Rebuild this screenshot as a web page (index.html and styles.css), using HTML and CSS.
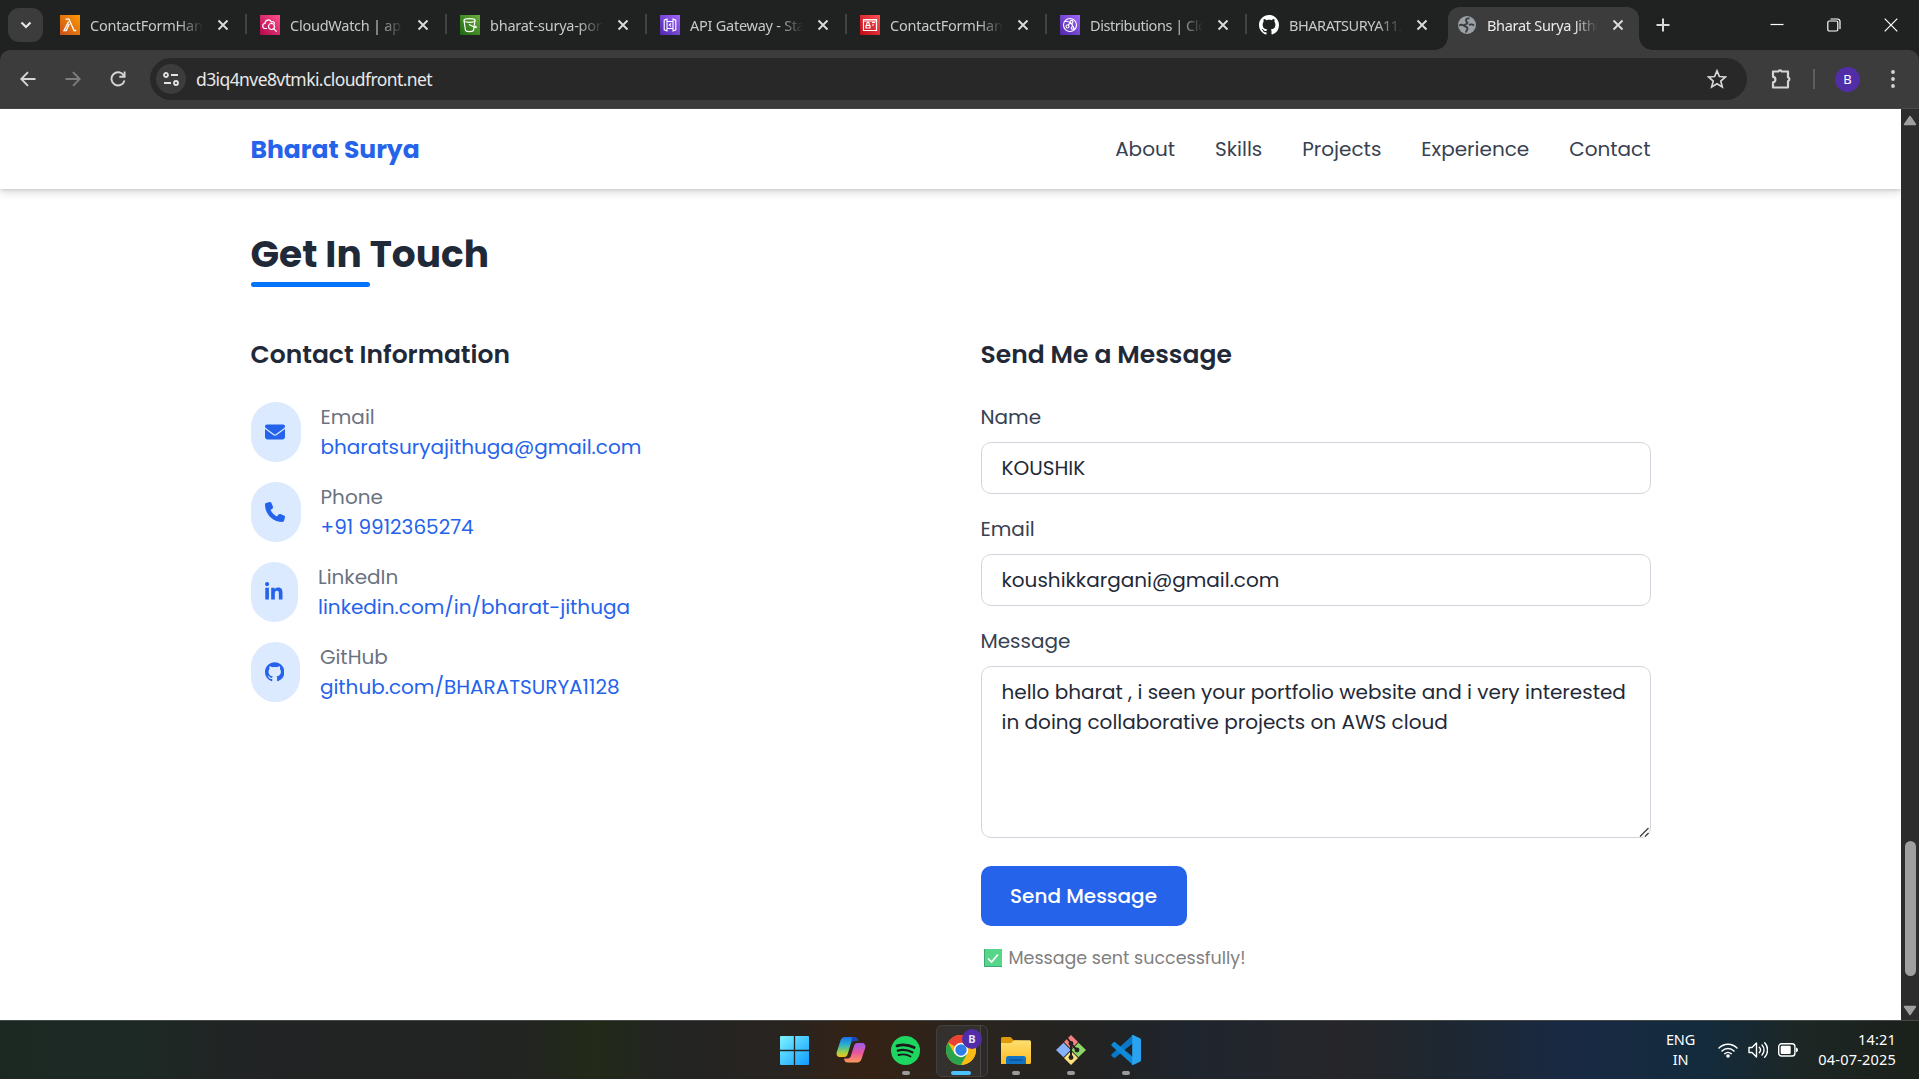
FILE: index.html
```html
<!DOCTYPE html>
<html lang="en">
<head>
<meta charset="utf-8">
<title>Bharat Surya Jithuga</title>
<link rel="stylesheet" href="styles.css">
</head>
<body>
<svg class="defs" aria-hidden="true">
  <defs>
    <symbol id="x" viewBox="0 0 12 12"><path d="M1.5 1.5l9 9M10.5 1.5l-9 9" stroke="currentColor" stroke-width="1.9" fill="none"/></symbol>
    <symbol id="octocat" viewBox="0 0 16 16"><path fill="currentColor" d="M8 0C3.58 0 0 3.58 0 8c0 3.54 2.29 6.53 5.47 7.59.4.07.55-.17.55-.38 0-.19-.01-.82-.01-1.49-2.01.37-2.53-.49-2.69-.94-.09-.23-.48-.94-.82-1.13-.28-.15-.68-.52-.01-.53.63-.01 1.08.58 1.23.82.72 1.21 1.87.87 2.33.66.07-.52.28-.87.51-1.07-1.78-.2-3.64-.89-3.64-3.95 0-.87.31-1.59.82-2.15-.08-.2-.36-1.02.08-2.12 0 0 .67-.21 2.2.82.64-.18 1.32-.27 2-.27s1.36.09 2 .27c1.53-1.04 2.2-.82 2.2-.82.44 1.1.16 1.92.08 2.12.51.56.82 1.27.82 2.15 0 3.07-1.87 3.75-3.65 3.95.29.25.54.73.54 1.48 0 1.07-.01 1.93-.01 2.2 0 .21.15.46.55.38A8.01 8.01 0 0 0 16 8c0-4.42-3.58-8-8-8z"/></symbol>
    <linearGradient id="orange" x1="0" y1="1" x2="1" y2="0"><stop offset="0" stop-color="#c8511b"/><stop offset="1" stop-color="#ff9900"/></linearGradient>
    <linearGradient id="pink" x1="0" y1="1" x2="1" y2="0"><stop offset="0" stop-color="#b0084d"/><stop offset="1" stop-color="#ff4f8b"/></linearGradient>
    <linearGradient id="green" x1="0" y1="1" x2="1" y2="0"><stop offset="0" stop-color="#1b660f"/><stop offset="1" stop-color="#6cae3e"/></linearGradient>
    <linearGradient id="purple" x1="0" y1="1" x2="1" y2="0"><stop offset="0" stop-color="#4d27a8"/><stop offset="1" stop-color="#a166ff"/></linearGradient>
    <linearGradient id="red" x1="0" y1="1" x2="1" y2="0"><stop offset="0" stop-color="#bd0816"/><stop offset="1" stop-color="#ff5252"/></linearGradient>
    <linearGradient id="win" x1="0" y1="0" x2="1" y2="1"><stop offset="0" stop-color="#7df3ff"/><stop offset="1" stop-color="#0f9bff"/></linearGradient>
    <linearGradient id="cpA" x1="0" y1="0" x2="0" y2="1"><stop offset="0" stop-color="#1b6ff0"/><stop offset=".4" stop-color="#2bb3c9"/><stop offset=".75" stop-color="#9ad04a"/><stop offset="1" stop-color="#f5c21b"/></linearGradient>
    <linearGradient id="cpB" x1="0" y1="0" x2="0" y2="1"><stop offset="0" stop-color="#9a5cf0"/><stop offset=".5" stop-color="#e8559d"/><stop offset="1" stop-color="#ff9a55"/></linearGradient>
    <linearGradient id="fold" x1="0" y1="0" x2="0" y2="1"><stop offset="0" stop-color="#ffdf70"/><stop offset="1" stop-color="#fcbb22"/></linearGradient>
  </defs>
</svg>

<header class="tabstrip">
  <button class="tab-search"><svg width="12" height="8" viewBox="0 0 12 8"><path d="M1.5 1.5L6 6l4.500-4.500" fill="none" stroke="#e6e6e6" stroke-width="2.200"/></svg></button>
  <div class="tab">
    <svg class="fav" viewBox="0 0 20 20"><path fill="url(#orange)" d="M0 0h20v20H0z"/><path d="M5.500 4.200H9l5 11.300h2.200M9.300 8.800L6.300 15.600H4L8.600 6.500" fill="none" stroke="#fff" stroke-width="1.300"/></svg>
    <span class="title">ContactFormHandler</span><svg class="close"><use href="#x"/></svg>
  </div>
  <div class="tab">
    <svg class="fav" viewBox="0 0 20 20"><path fill="url(#pink)" d="M0 0h20v20H0z"/><g fill="none" stroke="#fff" stroke-width="1.200"><path d="M7 13.500H5.500a2.500 2.500 0 0 1-.5-5C5 5 9.500 3.500 11.500 7c1.800-.8 3 .3 3 1.800"/><circle cx="11.500" cy="11.500" r="3"/><path d="M13.700 13.700l3 3"/></g></svg>
    <span class="title">CloudWatch | ap-south-1</span><svg class="close"><use href="#x"/></svg>
  </div>
  <div class="tab">
    <svg class="fav" viewBox="0 0 20 20"><path fill="url(#green)" d="M0 0h20v20H0z"/><g fill="none" stroke="#fff" stroke-width="1.200"><ellipse cx="9.500" cy="5.500" rx="5.500" ry="1.800"/><path d="M4 5.500l1.500 10c1.500 1.500 6.500 1.500 8 0l1.500-10M9 9.500l6 3c1.500.5 2-.8 0-1.500"/></g></svg>
    <span class="title">bharat-surya-portfolio</span><svg class="close"><use href="#x"/></svg>
  </div>
  <div class="tab">
    <svg class="fav" viewBox="0 0 20 20"><path fill="url(#purple)" d="M0 0h20v20H0z"/><g fill="none" stroke="#fff" stroke-width="1.100"><path d="M7 4v12l-2.800-1.200V5.200zM13 4v12l2.800-1.200V5.200zM7 6.500h6M7 13.500h6M11 8.500L9.300 10l1.700 1.500"/></g></svg>
    <span class="title">API Gateway - Stages</span><svg class="close"><use href="#x"/></svg>
  </div>
  <div class="tab">
    <svg class="fav" viewBox="0 0 20 20"><path fill="url(#red)" d="M0 0h20v20H0z"/><g fill="none" stroke="#fff" stroke-width="1.200"><path d="M3.500 4.500h13v11h-13zM6 13v-2.500h4V13zM6.800 10V8.500a1.200 1.200 0 0 1 2.400 0V10M12 7.500h3M12 10h2M3.500 6h13"/></g></svg>
    <span class="title">ContactFormHandler</span><svg class="close"><use href="#x"/></svg>
  </div>
  <div class="tab">
    <svg class="fav" viewBox="0 0 20 20"><path fill="url(#purple)" d="M0 0h20v20H0z"/><g fill="none" stroke="#fff" stroke-width="1.100"><circle cx="10" cy="10" r="6.500"/><circle cx="7.500" cy="11.500" r="1.500"/><circle cx="11.500" cy="6.800" r="1.400"/><circle cx="12.500" cy="13" r="1.300"/><path d="M8 10l2.500-2.200M12 8.200l.5 3.500M5 6.500c3-1 8 2 9.500 8"/></g></svg>
    <span class="title tight">Distributions | CloudFront</span><svg class="close"><use href="#x"/></svg>
  </div>
  <div class="tab last">
    <svg class="fav gh"><use href="#octocat"/></svg>
    <span class="title tight">BHARATSURYA1128</span><svg class="close"><use href="#x"/></svg>
  </div>
  <div class="tab active">
    <svg class="fav" viewBox="0 0 20 20"><circle cx="10" cy="10" r="9" fill="#9aa0a6"/><path d="M12.500 3.500c-2.500-.5-3.500.5-3.500 2s1.500 1.500 1.500 2.500S8 9 7.500 10M2 10.500c2-1 4.500-.5 5.500.5s3 .5 3 2.500-1.500 2-1.500 4M12 10c1.500-1 4-.5 5 .5" fill="none" stroke="#3c3c3c" stroke-width="1.900"/></svg>
    <span class="title">Bharat Surya Jithuga</span><svg class="close"><use href="#x"/></svg>
  </div>
  <svg class="newtab" viewBox="0 0 14 14"><path d="M7 .5v13M.5 7h13" stroke="#d8d8d8" stroke-width="2"/></svg>
  <div class="winctl">
    <svg width="14" height="14" viewBox="0 0 14 14"><path d="M.5 6.500h13" stroke="#fff" stroke-width="1.200"/></svg>
    <svg width="14" height="14" viewBox="0 0 14 14"><g fill="none" stroke="#fff" stroke-width="1.200"><rect x=".8" y="3" width="10" height="10" rx="1.500"/><path d="M3.500 1h7a2.500 2.500 0 0 1 2.500 2.500V11"/></g></svg>
    <svg width="14" height="14" viewBox="0 0 14 14"><path d="M.7.700l12.600 12.600M13.300.700L.7 13.300" stroke="#fff" stroke-width="1.200"/></svg>
  </div>
</header>

<div class="toolbar">
  <nav class="navbtns">
    <svg viewBox="0 0 16 16"><path d="M15.500 8H1.500M8 1.200L1.300 8 8 14.800" fill="none" stroke="#d5d5d5" stroke-width="1.900"/></svg>
    <svg viewBox="0 0 16 16"><path d="M.5 8h14M8 1.200L14.700 8 8 14.800" fill="none" stroke="#7d7d7d" stroke-width="1.900"/></svg>
    <svg viewBox="0 0 16 16"><path d="M13.800 4.500A6.600 6.600 0 1 0 14.500 9.500M14.600.5v5.300H9.300" fill="none" stroke="#d5d5d5" stroke-width="1.900"/></svg>
  </nav>
  <div class="omnibox">
    <span class="siteinfo"><svg width="16" height="14" viewBox="0 0 16 14"><g fill="none" stroke="#e3e3e3" stroke-width="1.800"><circle cx="3" cy="3" r="2"/><path d="M8 3h7M1 11h7"/><circle cx="13" cy="11" r="2"/></g></svg></span>
    <span class="url">d3iq4nve8vtmki.cloudfront.net</span>
    <svg class="star" viewBox="0 0 20 20"><path d="M10 1.800l2.400 5.700 6.100.5-4.700 4 1.500 6L10 14.800 4.700 18l1.500-6-4.700-4 6.100-.5z" fill="none" stroke="#d5d5d5" stroke-width="1.700"/></svg>
  </div>
  <svg class="puzzle" viewBox="0 0 22 22"><path d="M3 4h5.200a2 2 0 0 1 3.600 0H18v5.800a2 2 0 0 1 0 3.800V20H3v-5.200c3.200-.2 3.200-5.300 0-5.500z" transform="translate(0 -.5)" fill="none" stroke="#d5d5d5" stroke-width="2.200" stroke-linejoin="round"/></svg>
  <i class="vsep"></i>
  <span class="avatar">B</span>
  <svg class="menu" viewBox="0 0 4 20"><g fill="#d5d5d5"><circle cx="2" cy="3" r="1.900"/><circle cx="2" cy="10" r="1.900"/><circle cx="2" cy="17" r="1.900"/></g></svg>
</div>

<div class="viewport">
  <div class="page">
    <header class="site-header">
      <div class="container bar">
        <a class="brand">Bharat Surya</a>
        <nav class="links"><a>About</a><a>Skills</a><a>Projects</a><a>Experience</a><a>Contact</a></nav>
      </div>
    </header>
    <main class="container">
      <h2 class="section-title">Get In Touch</h2>
      <div class="cols">
        <section>
          <h3>Contact Information</h3>
          <ul class="contacts">
            <li>
              <span class="pill"><svg width="20" height="20" viewBox="0 0 512 512"><path d="M48 64C21.500 64 0 85.500 0 112c0 15.100 7.100 29.300 19.200 38.400L236.800 313.600c11.400 8.500 27 8.500 38.400 0L492.800 150.400c12.100-9.100 19.200-23.300 19.200-38.400c0-26.500-21.500-48-48-48H48zM0 176V384c0 35.300 28.700 64 64 64H448c35.300 0 64-28.700 64-64V176L294.400 339.200c-22.800 17.100-54 17.100-76.800 0L0 176z"/></svg></span>
              <div><p class="key">Email</p><a>bharatsuryajithuga@gmail.com</a></div>
            </li>
            <li>
              <span class="pill"><svg width="20" height="20" viewBox="0 0 512 512"><path d="M164.900 24.600c-7.700-18.600-28-28.500-47.400-23.200l-88 24C12.100 30.200 0 46 0 64C0 311.400 200.600 512 448 512c18 0 33.800-12.100 38.600-29.500l24-88c5.300-19.400-4.600-39.700-23.200-47.400l-96-40c-16.300-6.800-35.200-2.100-46.300 11.600L304.700 368C234.300 334.700 177.300 277.700 144 207.300L193.300 167c13.700-11.200 18.400-30 11.600-46.300l-40-96z"/></svg></span>
              <div><p class="key">Phone</p><a>+91 9912365274</a></div>
            </li>
            <li>
              <span class="pill"><svg width="17.500" height="20" viewBox="0 0 448 512"><path d="M100.280 448H7.400V148.900h92.880zM53.790 108.100C24.090 108.100 0 83.500 0 53.800a53.790 53.790 0 0 1 107.580 0c0 29.700-24.100 54.300-53.790 54.300zM447.900 448h-92.680V302.400c0-34.700-.7-79.200-48.290-79.200-48.290 0-55.690 37.700-55.690 76.700V448h-92.780V148.900h89.080v40.800h1.300c12.400-23.500 42.690-48.300 87.880-48.300 94 0 111.280 61.900 111.280 142.300V448z"/></svg></span>
              <div><p class="key">LinkedIn</p><a>linkedin.com/in/bharat-jithuga</a></div>
            </li>
            <li>
              <span class="pill"><svg width="19.400" height="20"><use href="#octocat"/></svg></span>
              <div><p class="key">GitHub</p><a>github.com/BHARATSURYA1128</a></div>
            </li>
          </ul>
        </section>
        <section>
          <h3>Send Me a Message</h3>
          <form class="form">
            <label for="name">Name</label>
            <input id="name" type="text" value="KOUSHIK">
            <label for="email">Email</label>
            <input id="email" type="email" value="koushikkargani@gmail.com" spellcheck="false">
            <label for="msg">Message</label>
            <div class="area">
              <textarea id="msg" spellcheck="false">hello bharat , i seen your portfolio website and i very interested in doing collaborative projects on AWS cloud</textarea>
              <svg class="grip" width="10" height="10" viewBox="0 0 10 10"><path d="M1 9.500L9.500 1M6 9.500L9.500 6" stroke="#444" stroke-width="1.400"/></svg>
            </div>
            <button type="button" class="send">Send Message</button>
            <p class="status"><svg width="18" height="18" viewBox="0 0 18 18"><path fill="#55d68b" d="M0 0h18v18H0z"/><path d="M.5 0v17.500H18" fill="none" stroke="#3da873"/><path d="M4 9.500l3.500 3.500L14 5.500" fill="none" stroke="#fff" stroke-width="1.700"/></svg><span>Message sent successfully!</span></p>
          </form>
        </section>
      </div>
    </main>
  </div>
  <aside class="scroll">
    <svg width="14" height="11" viewBox="0 0 14 11"><path d="M7 1.500L12.500 9.500h-11z" fill="#9f9f9f" stroke="#9f9f9f" stroke-linejoin="round" stroke-width="1.500"/></svg>
    <i class="thumb"></i>
    <svg width="14" height="11" viewBox="0 0 14 11"><path d="M7 9.500L12.500 1.500h-11z" fill="#9f9f9f" stroke="#9f9f9f" stroke-linejoin="round" stroke-width="1.500"/></svg>
  </aside>
</div>

<footer class="taskbar">
  <div class="apps">
    <span class="app"><svg width="29" height="29" viewBox="0 0 29 29"><path fill="url(#win)" d="M1 0h27a1 1 0 0 1 1 1v27a1 1 0 0 1-1 1H1a1 1 0 0 1-1-1V1a1 1 0 0 1 1-1z"/><path d="M14.500 0v29M0 14.500h29" stroke="#262423" stroke-width="1.300"/></svg></span>
    <span class="app"><svg width="30" height="28" viewBox="0 0 30 28"><path fill="url(#cpA)" d="M9 1h9c2.500 0 3.500 1 4.200 4H18c-2 0-2.800 1-3.300 3l-3 10c-.6 2-1.500 3-3.500 3H4c-2.500 0-4-2-3.200-5L4.500 4.500C5.200 2.300 6.500 1 9 1z"/><path fill="#1848b8" d="M16 1h2c2.500 0 3.500 1 4.200 4H18c-1.500 0-2.500.5-3 2z"/><path fill="url(#cpB)" d="M21 26.500h-9c-2.500 0-3.500-1-4-4h3.500c2 0 3-1 3.500-3l3-9.500c.6-2 1.500-3 3.500-3H26c2.500 0 4 2 3.200 5l-3.700 11c-.7 2.200-2 3.500-4.500 3.500z"/></svg></span>
    <span class="app"><svg width="29" height="29" viewBox="0 0 29 29"><circle cx="14.500" cy="14.500" r="14.500" fill="#1ed760"/><g fill="none" stroke="#1a1a1a" stroke-linecap="round"><path d="M6 9.800c6-1.800 12-1 17.200 1.800" stroke-width="2.800"/><path d="M6.800 14.600c5-1.500 10-.8 14.600 1.700" stroke-width="2.300"/><path d="M7.500 19c4.500-1.200 8.500-.7 12 1.500" stroke-width="1.900"/></g></svg><i class="dot"></i></span>
    <span class="app current"><svg width="30" height="30" viewBox="0 0 30 30"><circle cx="15" cy="15" r="15" fill="#fbbc16"/><path fill="#ea4335" d="M15 15L2 7.500A15 15 0 0 1 28 7.500z"/><path fill="#2ba24c" d="M2 7.500A15 15 0 0 0 15 30l6.500-11.300L15 15 8.500 18.800z"/><path fill="#fbbc16" d="M15 8h13.300A15 15 0 0 1 15 30l6.500-11.300z"/><circle cx="15" cy="15" r="7.200" fill="#fff"/><circle cx="15" cy="15" r="5.700" fill="#2f7de9"/></svg><b class="badge">B</b><i class="dot"></i></span>
    <span class="app"><svg width="30" height="27" viewBox="0 0 30 27"><path fill="#dc9a06" d="M0 1.500Q0 0 1.500 0h8l3.500 3.500H20V10H0z"/><path fill="url(#fold)" d="M0 6h10l3-2.700h15.500q1.500 0 1.500 1.500V25.500Q30 27 28.500 27H0z"/><path fill="#1272c4" d="M5 27v-5.500q0-2.500 2.500-2.500h15q2.500 0 2.500 2.500V27z"/><path d="M8.500 23h13" stroke="#0b4f92" stroke-width="1.200"/></svg><i class="dot"></i></span>
    <span class="app"><svg width="30" height="30" viewBox="0 0 30 30"><path fill="#f98080" d="M15 0l7 7-7 7-7-7z"/><path fill="#86b2fa" d="M7.500 7.700L14.700 15l-7.200 7.300L0 15z"/><path fill="#8cd568" d="M22.500 7.700L30 15l-7.500 7.300L15.300 15z"/><path fill="#fbe07c" d="M15 16l7 7-7 7-7-7z"/><path d="M11 3l4 5v15M15 9l6 6" stroke="#222" stroke-width="2" fill="none"/><circle cx="15" cy="8.500" r="2.400" fill="#222"/><circle cx="21" cy="15" r="2.400" fill="#222"/><circle cx="15" cy="22.500" r="2.400" fill="#222"/></svg><i class="dot"></i></span>
    <span class="app"><svg width="30" height="30" viewBox="0 0 30 30"><path fill="#0a78c8" d="M.6 19.200L22 0v8L4.500 22.500c-.8.600-1.500.500-2.200 0L.8 21c-.6-.6-.6-1.300-.2-1.800z"/><path fill="#0f8ad8" d="M.6 10.800L22 30v-8L4.500 7.500c-.8-.6-1.500-.5-2.200 0L.8 9c-.6.600-.6 1.300-.2 1.800z"/><path fill="#2aa4f0" d="M22 0l7 3.200q1 .5 1 1.700v20.200q0 1.200-1 1.700L22 30q-1 .2-1.500-.5.700.2.700-1V1.500q0-1.200-.7-1Q21-.2 22 0z"/></svg><i class="dot"></i></span>
  </div>
  <div class="tray">
    <div class="lang"><span>ENG</span><span>IN</span></div>
    <div class="sys">
      <svg width="20" height="16" viewBox="0 0 20 16"><g fill="none" stroke="#fff" stroke-width="1.500" stroke-linecap="round"><path d="M1 6a12.700 12.700 0 0 1 18 0M4 9a8.500 8.500 0 0 1 12 0M6.800 11.800a4.600 4.600 0 0 1 6.400 0"/></g><circle cx="10" cy="14" r="1.800" fill="#fff"/></svg>
      <svg width="20" height="18" viewBox="0 0 20 18"><g fill="none" stroke="#fff" stroke-width="1.400" stroke-linecap="round" stroke-linejoin="round"><path d="M1 6.500h3L8.500 2v14L4 11.500H1zM11.300 6.300a4 4 0 0 1 0 5.400M14 4a7.200 7.200 0 0 1 0 10M16.700 1.800a10.500 10.500 0 0 1 0 14.400"/></g></svg>
      <svg width="20" height="14" viewBox="0 0 20 14"><rect x=".7" y=".8" width="16.200" height="12.200" rx="2.800" fill="none" stroke="#fff" stroke-width="1.400"/><rect x="2.700" y="2.800" width="10" height="8.200" rx="1" fill="#fff"/><path d="M18 4.500q2 .5 2 2.400t-2 2.400z" fill="#fff"/></svg>
    </div>
    <div class="clock"><span>14:21</span><span>04-07-2025</span></div>
  </div>
</footer>
</body>
</html>
```
FILE: styles.css
```css
* { box-sizing: border-box; }
html, body { margin: 0; height: 100%; overflow: hidden; }
body {
  display: flex; flex-direction: column; width: 1919px; height: 1079px;
  background: #202221; font-family: "Noto Sans", "Open Sans", sans-serif;
}
svg { display: block; flex: none; }
.defs { position: absolute; width: 0; height: 0; }
h2, h3, p, ul { margin: 0; padding: 0; }

/* browser tab strip */
.tabstrip { flex: none; height: 50px; background: #202221; display: flex; align-items: flex-start; padding-left: 8px; }
.tab-search { flex: none; width: 35px; height: 34px; margin: 8px 7px 0 0; border: 0; border-radius: 11px; background: #3c3c3c; display: flex; align-items: center; justify-content: center; padding: 0; }
.tab {
  flex: none; width: 200px; height: 50px; padding-left: 10px; display: flex; align-items: center;
  position: relative; color: #c8c8c8; font-size: 14.5px;
}
.tab.last { width: 198px; padding-left: 9px; }
.tab::after { content: ""; position: absolute; right: 3px; top: 14px; width: 2px; height: 20px; background: #424443; }
.tab.last::after { display: none; }
.fav { width: 20px; height: 20px; margin-right: 10px; }
.gh { color: #fff; }
.title { width: 113px; overflow: hidden; white-space: nowrap; letter-spacing: -0.25px; -webkit-mask-image: linear-gradient(90deg, #000 78%, transparent); mask-image: linear-gradient(90deg, #000 78%, transparent); }
.title.tight { letter-spacing: -0.45px; }
.close { width: 12px; height: 12px; margin-left: 14px; color: #dcdcdc; }
.tab.active { width: 191px; height: 43px; margin-top: 7px; background: #3c3c3c; border-radius: 12px 12px 0 0; color: #ececec; padding: 0 0 7px 9px; }
.tab.active .title { width: 111px; letter-spacing: -.3px; }
.tab.active::before, .tab.active::after {
  content: ""; display: block; position: absolute; top: auto; bottom: 0; width: 13px; height: 13px; right: auto;
  left: -13px; background: radial-gradient(circle at 0 0, transparent 12.5px, #3c3c3c 13px);
}
.tab.active::after { left: 191px; background: radial-gradient(circle at 100% 0, transparent 12.5px, #3c3c3c 13px); }
.newtab { width: 14px; height: 14px; margin: 18px 0 0 17px; }
.winctl { margin: 18px 21px 0 auto; display: flex; gap: 43px; }

/* browser toolbar */
.toolbar {
  flex: none; height: 59px; display: flex; align-items: center; padding-left: 20px;
  background: #3c3c3c; border-bottom: 1px solid #4a4a4a; border-radius: 10px 10px 0 0;
}
.navbtns { display: flex; gap: 29px; width: 130px; }
.navbtns svg { width: 16px; height: 16px; }
.omnibox { width: 1597px; height: 42px; border-radius: 21px; background: #282828; display: flex; align-items: center; padding: 0 20px 0 6px; }
.siteinfo { width: 30px; height: 30px; border-radius: 50%; background: #3c3c3c; display: flex; align-items: center; justify-content: center; }
.url { margin-left: 10px; flex: 1; color: #e8e8e8; font-size: 17.5px; letter-spacing: -0.59px; }
.star { width: 20px; height: 20px; }
.puzzle { width: 22px; height: 22px; margin-left: 23px; }
.vsep { width: 2px; height: 20px; background: #5e5e5e; margin-left: 21px; }
.avatar { width: 25px; height: 25px; border-radius: 50%; background: #512da8; color: #fff; font-size: 13px; line-height: 25px; text-align: center; margin-left: 20px; }
.menu { width: 4px; height: 20px; margin-left: 31px; }

/* page */
.viewport { flex: none; height: 911px; display: flex; }
.page { flex: 1; background: #fff; font-family: Poppins, Inter, sans-serif; font-size: 20px; line-height: 30px; color: #1f2937; }
.container { width: 1400px; margin-left: 250.500px; }
.site-header { height: 80px; box-shadow: 0 4px 8px rgba(0, 0, 0, .13), 0 1px 3px rgba(0, 0, 0, .12); }
.bar { height: 80px; display: flex; align-items: center; justify-content: space-between; }
.brand { font-size: 25px; font-weight: 700; color: #2563eb; padding-top: 1px; }
.links { display: flex; gap: 40px; color: #374151; }
.section-title { width: fit-content; margin-top: 40px; height: 58px; font-size: 37.5px; line-height: 50px; font-weight: 700; white-space: nowrap; }
.section-title::after { content: ""; display: block; width: 50%; height: 5px; margin-top: 3px; border-radius: 3px; background: #0073ff; }
.cols { display: grid; grid-template-columns: 670px 670px; gap: 60px; margin-top: 50px; }
h3 { font-size: 25px; line-height: 35px; font-weight: 600; white-space: nowrap; }
.contacts { list-style: none; margin-top: 30px; display: flex; flex-direction: column; gap: 20px; }
.contacts li { display: flex; gap: 20px; height: 60px; }
.pill { height: 60px; padding: 0 15px; border-radius: 25px; background: #dbeafe; display: flex; align-items: center; color: #2563eb; }
.pill svg { margin-left: -.5px; margin-right: .5px; }
.pill path { fill: #2563eb; }
.contacts a { color: #2563eb; white-space: nowrap; }
.key { color: #6b7280; }
.form { margin-top: 30px; display: flex; flex-direction: column; align-items: flex-start; }
.form label { color: #374151; margin-bottom: 10px; }
.form input, .form textarea {
  display: block; width: 670px; height: 52px; margin: 0 0 20px; padding: 10px 20px; border: 1px solid #d1d5db; border-radius: 10px;
  background: #fff; color: #1f2937; font: inherit; outline: 0;
}
.area { position: relative; margin-bottom: 28px; }
.form textarea { height: 172px; margin: 0; resize: none; overflow: hidden; }
.grip { position: absolute; right: 2px; bottom: 1px; }
.send { width: 206px; height: 60px; padding: 0; border: 0; border-radius: 10px; background: #2563eb; color: #fff; font: 500 20px/30px Poppins, Inter, sans-serif; }
.status { margin-top: 17px; display: flex; align-items: center; padding-left: 3px; gap: 7px; font-size: 17.5px; color: #808080; }

.scroll { width: 18px; background: #2c2c2c; display: flex; flex-direction: column; align-items: center; padding: 6px 0 4px; }
.thumb { width: 11px; height: 135px; border-radius: 6px; background: #9f9f9f; margin: auto 0 29px; }

/* taskbar */
.taskbar {
  flex: none; height: 59px; position: relative; border-top: 1px solid #454a48; display: flex; justify-content: flex-end; color: #fff;
  background: linear-gradient(90deg, #1c2923 0, #1d2925 7%, #222324 14%, #222422 27%, #222a18 31%, #232423 35%, #292420 41%, #352214 45%, #2b241d 50%, #222322 57%, #1f252e 62%, #26262a 70%, #1e2730 75%, #192944 82%, #132b3c 89%, #1d2624 94%, #1b211b 100%);
}
.apps { position: absolute; left: 768px; top: 4px; display: flex; }
.app { width: 55px; height: 50px; display: flex; align-items: center; justify-content: center; position: relative; }
.app svg { position: relative; }
.app:first-child svg { left: -1px; }
.current::before { content: ""; position: absolute; left: 3px; top: 0; width: 50px; height: 50px; border: 1px solid #44403d; border-radius: 6px; background: linear-gradient(90deg, #34302e 43px, #4a4745 43px, #4a4745 44px, #2c2a29 44px); }
.dot { position: absolute; left: 23.500px; bottom: 0; width: 8px; height: 4px; border-radius: 2px; background: #9a9a9a; }
.current .dot { left: 18px; width: 20px; background: #4cc2ff; }
.badge { position: absolute; left: 29px; top: 4px; width: 20px; height: 20px; border-radius: 50%; background: #512da8; color: #e6e0f5; font-size: 11px; line-height: 20px; text-align: center; }
.tray { display: flex; align-items: center; height: 57px; padding-right: 23px; font-size: 14.500px; line-height: 20px; }
.lang, .clock { display: flex; flex-direction: column; margin-top: -1px; }
.lang { align-items: center; letter-spacing: -.2px; margin-right: 23px; }
.clock { align-items: flex-end; width: 78px; letter-spacing: .2px; margin-left: 20px; }
.sys { display: flex; align-items: center; gap: 10px; padding-top: 1px; }
```
